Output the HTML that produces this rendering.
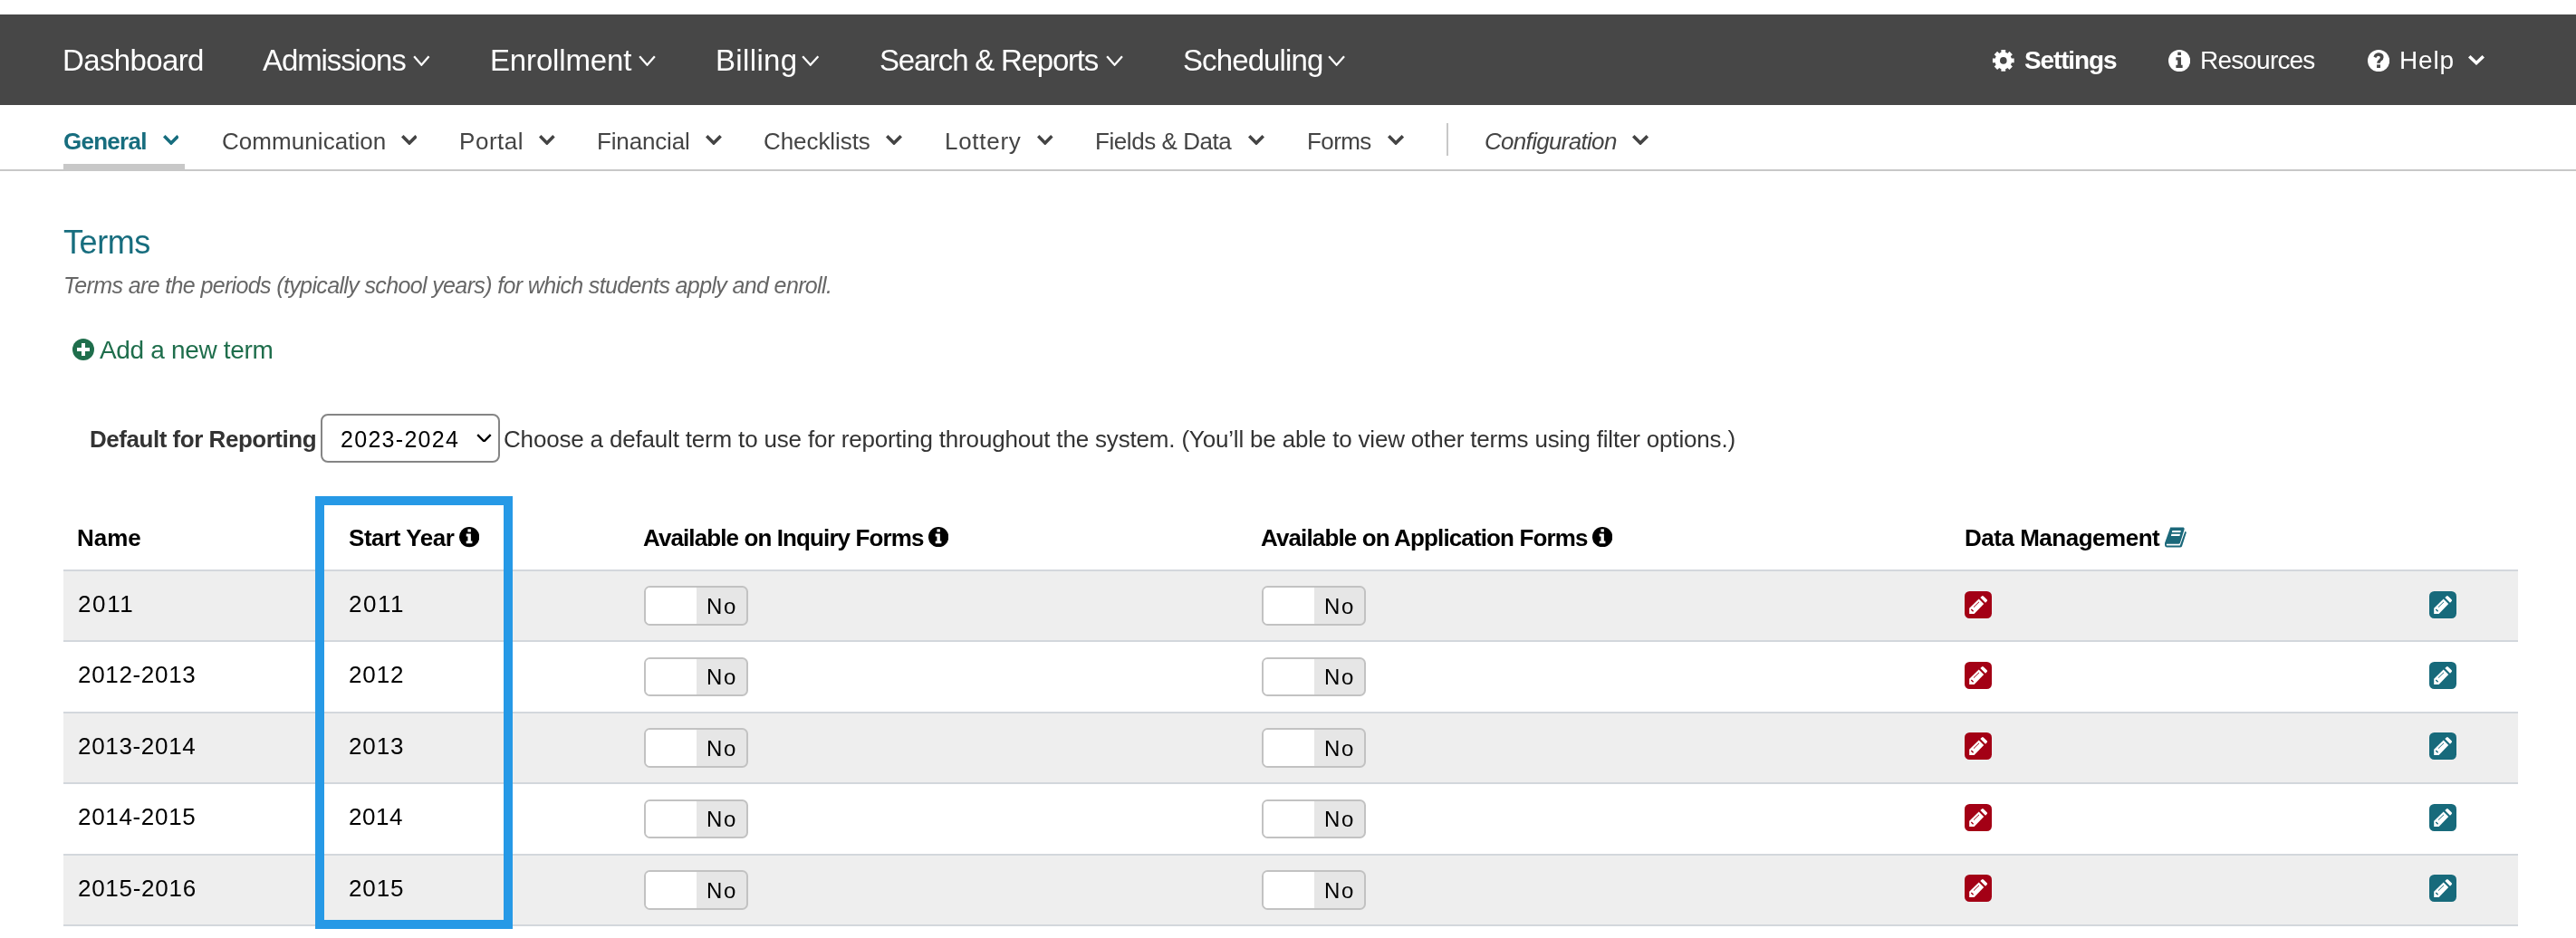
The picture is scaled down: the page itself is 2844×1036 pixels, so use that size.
<!DOCTYPE html><html><head><meta charset="utf-8"><title>Terms</title><style>
html,body{margin:0;padding:0;background:#fff;}
#pg{position:relative;width:2844px;height:1036px;overflow:hidden;background:#fff;font-family:"Liberation Sans", sans-serif;}
.t{position:absolute;white-space:nowrap;line-height:1;will-change:transform;}
.a{position:absolute;display:block;}
.tg{width:115px;height:43.5px;box-sizing:border-box;border:2px solid #c2c2c2;border-radius:6.5px;overflow:hidden;background:#e6e6e6;}
.tgw{position:absolute;left:0;top:0;width:56px;height:100%;background:#fff;}
.tgt{position:absolute;left:66.90px;top:8.60px;font-size:24px;line-height:1;color:#000;letter-spacing:1.600px;white-space:nowrap;will-change:transform;}
</style></head><body><div id="pg">
<div class="a" style="left:0;top:16px;width:2844px;height:100px;background:#474747"></div>
<div class="a" style="left:0;top:187px;width:2844px;height:2px;background:#c8c8c8"></div>
<div class="a" style="left:70px;top:181px;width:134px;height:6px;background:#c8c8c8"></div>
<div class="a" style="left:1597px;top:136px;width:2px;height:36px;background:#c8c8c8"></div>
<div class="a" style="left:70px;top:629px;width:2710px;height:2px;background:#d3d7dc"></div>
<div class="a" style="left:70px;top:631px;width:2710px;height:76px;background:#eeeeee"></div>
<div class="a" style="left:70px;top:707px;width:2710px;height:2px;background:#d3d7dc"></div>
<div class="a tg" style="left:711.2px;top:647.4px"><div class="tgw"></div><div class="tgg"></div><span class="tgt">No</span></div>
<div class="a tg" style="left:1393.4px;top:647.4px"><div class="tgw"></div><div class="tgg"></div><span class="tgt">No</span></div>
<svg class="a" style="left:2169px;top:652.5px" width="30" height="30" viewBox="0 0 30 30"><rect x="0" y="0" width="30" height="30" rx="5.5" fill="#a30015"/><path d="M5.2 18.8 L15.7 8.6 L21.2 14.1 L10.6 24.9 L5.2 24.9 Z" fill="#fff"/><path d="M17.3 7.1 L19 5.4 Q19.9 4.6 20.8 5.4 L24.7 9.3 Q25.5 10.2 24.7 11 L23 12.8 Z" fill="#fff"/><path d="M10 17.6 L16 11.8" stroke="#a30015" stroke-width="1" /><path d="M7.3 19.9 L9.6 22.3" stroke="#a30015" stroke-width="1.4" /></svg>
<svg class="a" style="left:2682px;top:652.5px" width="30" height="30" viewBox="0 0 30 30"><rect x="0" y="0" width="30" height="30" rx="5.5" fill="#176a7b"/><path d="M5.2 18.8 L15.7 8.6 L21.2 14.1 L10.6 24.9 L5.2 24.9 Z" fill="#fff"/><path d="M17.3 7.1 L19 5.4 Q19.9 4.6 20.8 5.4 L24.7 9.3 Q25.5 10.2 24.7 11 L23 12.8 Z" fill="#fff"/><path d="M10 17.6 L16 11.8" stroke="#176a7b" stroke-width="1" /><path d="M7.3 19.9 L9.6 22.3" stroke="#176a7b" stroke-width="1.4" /></svg>
<div class="a" style="left:70px;top:709px;width:2710px;height:77px;background:#fff"></div>
<div class="a" style="left:70px;top:786px;width:2710px;height:2px;background:#d3d7dc"></div>
<div class="a tg" style="left:711.2px;top:725.8px"><div class="tgw"></div><div class="tgg"></div><span class="tgt">No</span></div>
<div class="a tg" style="left:1393.4px;top:725.8px"><div class="tgw"></div><div class="tgg"></div><span class="tgt">No</span></div>
<svg class="a" style="left:2169px;top:730.9px" width="30" height="30" viewBox="0 0 30 30"><rect x="0" y="0" width="30" height="30" rx="5.5" fill="#a30015"/><path d="M5.2 18.8 L15.7 8.6 L21.2 14.1 L10.6 24.9 L5.2 24.9 Z" fill="#fff"/><path d="M17.3 7.1 L19 5.4 Q19.9 4.6 20.8 5.4 L24.7 9.3 Q25.5 10.2 24.7 11 L23 12.8 Z" fill="#fff"/><path d="M10 17.6 L16 11.8" stroke="#a30015" stroke-width="1" /><path d="M7.3 19.9 L9.6 22.3" stroke="#a30015" stroke-width="1.4" /></svg>
<svg class="a" style="left:2682px;top:730.9px" width="30" height="30" viewBox="0 0 30 30"><rect x="0" y="0" width="30" height="30" rx="5.5" fill="#176a7b"/><path d="M5.2 18.8 L15.7 8.6 L21.2 14.1 L10.6 24.9 L5.2 24.9 Z" fill="#fff"/><path d="M17.3 7.1 L19 5.4 Q19.9 4.6 20.8 5.4 L24.7 9.3 Q25.5 10.2 24.7 11 L23 12.8 Z" fill="#fff"/><path d="M10 17.6 L16 11.8" stroke="#176a7b" stroke-width="1" /><path d="M7.3 19.9 L9.6 22.3" stroke="#176a7b" stroke-width="1.4" /></svg>
<div class="a" style="left:70px;top:788px;width:2710px;height:76px;background:#eeeeee"></div>
<div class="a" style="left:70px;top:864px;width:2710px;height:2px;background:#d3d7dc"></div>
<div class="a tg" style="left:711.2px;top:804.2px"><div class="tgw"></div><div class="tgg"></div><span class="tgt">No</span></div>
<div class="a tg" style="left:1393.4px;top:804.2px"><div class="tgw"></div><div class="tgg"></div><span class="tgt">No</span></div>
<svg class="a" style="left:2169px;top:809.3px" width="30" height="30" viewBox="0 0 30 30"><rect x="0" y="0" width="30" height="30" rx="5.5" fill="#a30015"/><path d="M5.2 18.8 L15.7 8.6 L21.2 14.1 L10.6 24.9 L5.2 24.9 Z" fill="#fff"/><path d="M17.3 7.1 L19 5.4 Q19.9 4.6 20.8 5.4 L24.7 9.3 Q25.5 10.2 24.7 11 L23 12.8 Z" fill="#fff"/><path d="M10 17.6 L16 11.8" stroke="#a30015" stroke-width="1" /><path d="M7.3 19.9 L9.6 22.3" stroke="#a30015" stroke-width="1.4" /></svg>
<svg class="a" style="left:2682px;top:809.3px" width="30" height="30" viewBox="0 0 30 30"><rect x="0" y="0" width="30" height="30" rx="5.5" fill="#176a7b"/><path d="M5.2 18.8 L15.7 8.6 L21.2 14.1 L10.6 24.9 L5.2 24.9 Z" fill="#fff"/><path d="M17.3 7.1 L19 5.4 Q19.9 4.6 20.8 5.4 L24.7 9.3 Q25.5 10.2 24.7 11 L23 12.8 Z" fill="#fff"/><path d="M10 17.6 L16 11.8" stroke="#176a7b" stroke-width="1" /><path d="M7.3 19.9 L9.6 22.3" stroke="#176a7b" stroke-width="1.4" /></svg>
<div class="a" style="left:70px;top:866px;width:2710px;height:77px;background:#fff"></div>
<div class="a" style="left:70px;top:943px;width:2710px;height:2px;background:#d3d7dc"></div>
<div class="a tg" style="left:711.2px;top:882.6px"><div class="tgw"></div><div class="tgg"></div><span class="tgt">No</span></div>
<div class="a tg" style="left:1393.4px;top:882.6px"><div class="tgw"></div><div class="tgg"></div><span class="tgt">No</span></div>
<svg class="a" style="left:2169px;top:887.7px" width="30" height="30" viewBox="0 0 30 30"><rect x="0" y="0" width="30" height="30" rx="5.5" fill="#a30015"/><path d="M5.2 18.8 L15.7 8.6 L21.2 14.1 L10.6 24.9 L5.2 24.9 Z" fill="#fff"/><path d="M17.3 7.1 L19 5.4 Q19.9 4.6 20.8 5.4 L24.7 9.3 Q25.5 10.2 24.7 11 L23 12.8 Z" fill="#fff"/><path d="M10 17.6 L16 11.8" stroke="#a30015" stroke-width="1" /><path d="M7.3 19.9 L9.6 22.3" stroke="#a30015" stroke-width="1.4" /></svg>
<svg class="a" style="left:2682px;top:887.7px" width="30" height="30" viewBox="0 0 30 30"><rect x="0" y="0" width="30" height="30" rx="5.5" fill="#176a7b"/><path d="M5.2 18.8 L15.7 8.6 L21.2 14.1 L10.6 24.9 L5.2 24.9 Z" fill="#fff"/><path d="M17.3 7.1 L19 5.4 Q19.9 4.6 20.8 5.4 L24.7 9.3 Q25.5 10.2 24.7 11 L23 12.8 Z" fill="#fff"/><path d="M10 17.6 L16 11.8" stroke="#176a7b" stroke-width="1" /><path d="M7.3 19.9 L9.6 22.3" stroke="#176a7b" stroke-width="1.4" /></svg>
<div class="a" style="left:70px;top:945px;width:2710px;height:76px;background:#eeeeee"></div>
<div class="a" style="left:70px;top:1021px;width:2710px;height:2px;background:#d3d7dc"></div>
<div class="a tg" style="left:711.2px;top:961.0px"><div class="tgw"></div><div class="tgg"></div><span class="tgt">No</span></div>
<div class="a tg" style="left:1393.4px;top:961.0px"><div class="tgw"></div><div class="tgg"></div><span class="tgt">No</span></div>
<svg class="a" style="left:2169px;top:966.1px" width="30" height="30" viewBox="0 0 30 30"><rect x="0" y="0" width="30" height="30" rx="5.5" fill="#a30015"/><path d="M5.2 18.8 L15.7 8.6 L21.2 14.1 L10.6 24.9 L5.2 24.9 Z" fill="#fff"/><path d="M17.3 7.1 L19 5.4 Q19.9 4.6 20.8 5.4 L24.7 9.3 Q25.5 10.2 24.7 11 L23 12.8 Z" fill="#fff"/><path d="M10 17.6 L16 11.8" stroke="#a30015" stroke-width="1" /><path d="M7.3 19.9 L9.6 22.3" stroke="#a30015" stroke-width="1.4" /></svg>
<svg class="a" style="left:2682px;top:966.1px" width="30" height="30" viewBox="0 0 30 30"><rect x="0" y="0" width="30" height="30" rx="5.5" fill="#176a7b"/><path d="M5.2 18.8 L15.7 8.6 L21.2 14.1 L10.6 24.9 L5.2 24.9 Z" fill="#fff"/><path d="M17.3 7.1 L19 5.4 Q19.9 4.6 20.8 5.4 L24.7 9.3 Q25.5 10.2 24.7 11 L23 12.8 Z" fill="#fff"/><path d="M10 17.6 L16 11.8" stroke="#176a7b" stroke-width="1" /><path d="M7.3 19.9 L9.6 22.3" stroke="#176a7b" stroke-width="1.4" /></svg>
<div class="a" style="left:354.4px;top:456.5px;width:197.2px;height:54.9px;box-sizing:border-box;border:2px solid #858585;border-radius:8px;background:#fff"></div>
<span id="n_dash" class="t" style="left:68.60px;top:49.96px;font-size:33px;font-weight:400;font-style:normal;color:#fff;letter-spacing:-0.625px">Dashboard</span>
<span id="n_adm" class="t" style="left:290.00px;top:49.96px;font-size:33px;font-weight:400;font-style:normal;color:#fff;letter-spacing:-1.111px">Admissions</span>
<span id="n_enr" class="t" style="left:541.41px;top:49.96px;font-size:33px;font-weight:400;font-style:normal;color:#fff;letter-spacing:-0.156px">Enrollment</span>
<span id="n_bil" class="t" style="left:790.31px;top:49.96px;font-size:33px;font-weight:400;font-style:normal;color:#fff;letter-spacing:0.350px">Billing</span>
<span id="n_sea" class="t" style="left:971.00px;top:49.96px;font-size:33px;font-weight:400;font-style:normal;color:#fff;letter-spacing:-1.213px">Search &amp; Reports</span>
<span id="n_sch" class="t" style="left:1306.00px;top:49.96px;font-size:33px;font-weight:400;font-style:normal;color:#fff;letter-spacing:-0.889px">Scheduling</span>
<span id="n_set" class="t" style="left:2235.00px;top:53.39px;font-size:28px;font-weight:700;font-style:normal;color:#fff;letter-spacing:-1.143px">Settings</span>
<span id="n_res" class="t" style="left:2429.00px;top:53.39px;font-size:28px;font-weight:400;font-style:normal;color:#fff;letter-spacing:-0.812px">Resources</span>
<span id="n_hlp" class="t" style="left:2648.50px;top:53.39px;font-size:28px;font-weight:400;font-style:normal;color:#fff;letter-spacing:0.833px">Help</span>
<span id="s_gen" class="t" style="left:69.60px;top:142.99px;font-size:26px;font-weight:700;font-style:normal;color:#176d7e;letter-spacing:-0.733px">General</span>
<span id="s_com" class="t" style="left:244.71px;top:142.99px;font-size:26px;font-weight:400;font-style:normal;color:#444;letter-spacing:0.058px">Communication</span>
<span id="s_por" class="t" style="left:507.21px;top:142.99px;font-size:26px;font-weight:400;font-style:normal;color:#444;letter-spacing:0.540px">Portal</span>
<span id="s_fin" class="t" style="left:659.31px;top:142.99px;font-size:26px;font-weight:400;font-style:normal;color:#444;letter-spacing:-0.162px">Financial</span>
<span id="s_chk" class="t" style="left:843.41px;top:142.99px;font-size:26px;font-weight:400;font-style:normal;color:#444;letter-spacing:-0.067px">Checklists</span>
<span id="s_lot" class="t" style="left:1042.60px;top:142.99px;font-size:26px;font-weight:400;font-style:normal;color:#444;letter-spacing:0.717px">Lottery</span>
<span id="s_fld" class="t" style="left:1208.91px;top:142.99px;font-size:26px;font-weight:400;font-style:normal;color:#444;letter-spacing:-0.442px">Fields &amp; Data</span>
<span id="s_frm" class="t" style="left:1442.60px;top:142.99px;font-size:26px;font-weight:400;font-style:normal;color:#444;letter-spacing:-0.575px">Forms</span>
<span id="s_cfg" class="t" style="left:1638.50px;top:143.19px;font-size:26px;font-weight:400;font-style:italic;color:#444;letter-spacing:-0.692px">Configuration</span>
<span id="c_terms" class="t" style="left:69.71px;top:250.32px;font-size:36px;font-weight:400;font-style:normal;color:#176d7e;letter-spacing:-0.425px">Terms</span>
<span id="c_sub" class="t" style="left:69.60px;top:303.33px;font-size:25px;font-weight:400;font-style:italic;color:#666;letter-spacing:-0.634px">Terms are the periods (typically school years) for which students apply and enroll.</span>
<span id="c_add" class="t" style="left:109.81px;top:372.59px;font-size:28px;font-weight:400;font-style:normal;color:#1f6e4c;letter-spacing:-0.338px">Add a new term</span>
<span id="c_dfr" class="t" style="left:99.31px;top:471.99px;font-size:26px;font-weight:700;font-style:normal;color:#333;letter-spacing:-0.470px">Default for Reporting</span>
<span id="c_sel" class="t" style="left:375.91px;top:472.63px;font-size:25px;font-weight:400;font-style:normal;color:#000;letter-spacing:1.288px">2023-2024</span>
<span id="c_cho" class="t" style="left:556.41px;top:471.99px;font-size:26px;font-weight:400;font-style:normal;color:#333;letter-spacing:-0.179px">Choose a default term to use for reporting throughout the system. (You’ll be able to view other terms using filter options.)</span>
<span id="h_name" class="t" style="left:84.81px;top:580.89px;font-size:26px;font-weight:700;font-style:normal;color:#000;letter-spacing:0.000px">Name</span>
<span id="h_sy" class="t" style="left:384.60px;top:580.89px;font-size:26px;font-weight:700;font-style:normal;color:#000;letter-spacing:-0.456px">Start Year</span>
<span id="h_inq" class="t" style="left:709.91px;top:580.89px;font-size:26px;font-weight:700;font-style:normal;color:#000;letter-spacing:-0.896px">Available on Inquiry Forms</span>
<span id="h_app" class="t" style="left:1392.41px;top:580.89px;font-size:26px;font-weight:700;font-style:normal;color:#000;letter-spacing:-0.872px">Available on Application Forms</span>
<span id="h_dm" class="t" style="left:2168.50px;top:581.29px;font-size:26px;font-weight:700;font-style:normal;color:#000;letter-spacing:-0.486px">Data Management</span>
<span id="r0_name" class="t" style="left:85.91px;top:653.89px;font-size:26px;font-weight:400;font-style:normal;color:#000;letter-spacing:1.633px">2011</span>
<span id="r0_sy" class="t" style="left:384.91px;top:653.89px;font-size:26px;font-weight:400;font-style:normal;color:#000;letter-spacing:1.533px">2011</span>
<span id="r1_name" class="t" style="left:85.91px;top:732.34px;font-size:26px;font-weight:400;font-style:normal;color:#000;letter-spacing:0.675px">2012-2013</span>
<span id="r1_sy" class="t" style="left:384.91px;top:732.34px;font-size:26px;font-weight:400;font-style:normal;color:#000;letter-spacing:0.867px">2012</span>
<span id="r2_name" class="t" style="left:85.91px;top:810.79px;font-size:26px;font-weight:400;font-style:normal;color:#000;letter-spacing:0.675px">2013-2014</span>
<span id="r2_sy" class="t" style="left:384.91px;top:810.79px;font-size:26px;font-weight:400;font-style:normal;color:#000;letter-spacing:0.867px">2013</span>
<span id="r3_name" class="t" style="left:85.91px;top:889.24px;font-size:26px;font-weight:400;font-style:normal;color:#000;letter-spacing:0.675px">2014-2015</span>
<span id="r3_sy" class="t" style="left:384.91px;top:889.24px;font-size:26px;font-weight:400;font-style:normal;color:#000;letter-spacing:0.533px">2014</span>
<span id="r4_name" class="t" style="left:85.91px;top:967.69px;font-size:26px;font-weight:400;font-style:normal;color:#000;letter-spacing:0.725px">2015-2016</span>
<span id="r4_sy" class="t" style="left:384.91px;top:967.69px;font-size:26px;font-weight:400;font-style:normal;color:#000;letter-spacing:0.867px">2015</span>
<svg class="a" style="left:456.4px;top:61.4px" width="18.7" height="11.8" viewBox="0 0 18.7 11.8"><path d="M1.15 1.15 L9.35 10.65 L17.55 1.15" fill="none" stroke="#fff" stroke-width="2.3" stroke-linecap="butt" stroke-linejoin="miter"/></svg>
<svg class="a" style="left:705.4px;top:61.4px" width="19.0" height="11.8" viewBox="0 0 19.0 11.8"><path d="M1.15 1.15 L9.50 10.65 L17.85 1.15" fill="none" stroke="#fff" stroke-width="2.3" stroke-linecap="butt" stroke-linejoin="miter"/></svg>
<svg class="a" style="left:885.4px;top:61.4px" width="19.5" height="11.8" viewBox="0 0 19.5 11.8"><path d="M1.15 1.15 L9.75 10.65 L18.35 1.15" fill="none" stroke="#fff" stroke-width="2.3" stroke-linecap="butt" stroke-linejoin="miter"/></svg>
<svg class="a" style="left:1221.0px;top:61.4px" width="19.1" height="11.8" viewBox="0 0 19.1 11.8"><path d="M1.15 1.15 L9.55 10.65 L17.95 1.15" fill="none" stroke="#fff" stroke-width="2.3" stroke-linecap="butt" stroke-linejoin="miter"/></svg>
<svg class="a" style="left:1466.4px;top:61.4px" width="19.2" height="11.8" viewBox="0 0 19.2 11.8"><path d="M1.15 1.15 L9.60 10.65 L18.05 1.15" fill="none" stroke="#fff" stroke-width="2.3" stroke-linecap="butt" stroke-linejoin="miter"/></svg>
<svg class="a" style="left:2725.0px;top:61.0px" width="18.0" height="11.0" viewBox="0 0 100 64" preserveAspectRatio="none"><path d="M0 14 L14 0 L50 36 L86 0 L100 14 L50 64 Z" fill="#fff"/></svg>
<svg class="a" style="left:179.6px;top:148.8px" width="17.9" height="11.6" viewBox="0 0 100 64" preserveAspectRatio="none"><path d="M0 14 L14 0 L50 36 L86 0 L100 14 L50 64 Z" fill="#176d7e"/></svg>
<svg class="a" style="left:442.6px;top:148.8px" width="17.9" height="11.6" viewBox="0 0 100 64" preserveAspectRatio="none"><path d="M0 14 L14 0 L50 36 L86 0 L100 14 L50 64 Z" fill="#444"/></svg>
<svg class="a" style="left:595.0px;top:148.8px" width="17.7" height="11.6" viewBox="0 0 100 64" preserveAspectRatio="none"><path d="M0 14 L14 0 L50 36 L86 0 L100 14 L50 64 Z" fill="#444"/></svg>
<svg class="a" style="left:779.0px;top:148.8px" width="17.9" height="11.6" viewBox="0 0 100 64" preserveAspectRatio="none"><path d="M0 14 L14 0 L50 36 L86 0 L100 14 L50 64 Z" fill="#444"/></svg>
<svg class="a" style="left:978.0px;top:148.8px" width="18.0" height="11.6" viewBox="0 0 100 64" preserveAspectRatio="none"><path d="M0 14 L14 0 L50 36 L86 0 L100 14 L50 64 Z" fill="#444"/></svg>
<svg class="a" style="left:1145.0px;top:148.8px" width="17.6" height="11.6" viewBox="0 0 100 64" preserveAspectRatio="none"><path d="M0 14 L14 0 L50 36 L86 0 L100 14 L50 64 Z" fill="#444"/></svg>
<svg class="a" style="left:1378.0px;top:148.8px" width="18.0" height="11.6" viewBox="0 0 100 64" preserveAspectRatio="none"><path d="M0 14 L14 0 L50 36 L86 0 L100 14 L50 64 Z" fill="#444"/></svg>
<svg class="a" style="left:1531.5px;top:148.8px" width="18.1" height="11.6" viewBox="0 0 100 64" preserveAspectRatio="none"><path d="M0 14 L14 0 L50 36 L86 0 L100 14 L50 64 Z" fill="#444"/></svg>
<svg class="a" style="left:1801.6px;top:148.8px" width="18.1" height="11.6" viewBox="0 0 100 64" preserveAspectRatio="none"><path d="M0 14 L14 0 L50 36 L86 0 L100 14 L50 64 Z" fill="#444"/></svg>
<svg class="a" style="left:526.3px;top:478.8px" width="16.9" height="9.7" viewBox="0 0 16.9 9.7"><path d="M1.20 1.20 L8.45 8.50 L15.70 1.20" fill="none" stroke="#000" stroke-width="2.4" stroke-linecap="butt" stroke-linejoin="miter"/></svg>
<svg class="a" style="left:0;top:0" width="2844" height="120" viewBox="0 0 2844 120"><path d="M2209.35 58.03 L2209.40 55.04 L2214.20 55.04 L2214.25 58.03 L2216.33 58.90 L2218.49 56.81 L2221.89 60.21 L2219.80 62.37 L2220.67 64.45 L2223.66 64.50 L2223.66 69.30 L2220.67 69.35 L2219.80 71.43 L2221.89 73.59 L2218.49 76.99 L2216.33 74.90 L2214.25 75.77 L2214.20 78.76 L2209.40 78.76 L2209.35 75.77 L2207.27 74.90 L2205.11 76.99 L2201.71 73.59 L2203.80 71.43 L2202.93 69.35 L2199.94 69.30 L2199.94 64.50 L2202.93 64.45 L2203.80 62.37 L2201.71 60.21 L2205.11 56.81 L2207.27 58.90 Z" fill="#fff"/><circle cx="2211.8" cy="66.9" r="9.2" fill="#fff"/><circle cx="2211.8" cy="66.9" r="3.8" fill="#474747"/></svg>
<svg class="a" style="left:2393.8px;top:54.9px" width="24.2" height="24.2" viewBox="0 0 24.2 24.2"><circle cx="12.1" cy="12.1" r="12.1" fill="#fff"/><rect x="10.24" y="2.6" width="3.74" height="3.4" fill="#474747"/><path d="M8.38 8.16 H13.98 V16.74 H15.63 V19.91 H8.38 V16.74 H10.24 V11.52 H8.38 Z" fill="#474747"/></svg>
<svg class="a" style="left:2613.8px;top:54.9px" width="24.2" height="24.2" viewBox="0 0 24.2 24.2"><circle cx="12.1" cy="12.1" r="12.1" fill="#fff"/><path d="M6.4 7.4 Q8.3 3.2 12.4 3.3 Q17.6 3.6 17.6 8.2 Q17.4 11 14.9 12.6 Q13.8 13.3 13.8 14.7 H10.2 Q10.1 12.4 12.1 10.9 Q14 9.7 13.9 8.3 Q13.6 6.8 12 6.7 Q10.4 6.8 9.3 8.9 Z" fill="#474747"/><rect x="10.1" y="16.4" width="3.9" height="3.6" fill="#474747"/></svg>
<svg class="a" style="left:79.9px;top:374px" width="24" height="24" viewBox="0 0 24 24"><circle cx="12" cy="12" r="12" fill="#1f6e4c"/><path d="M10 5 H14 V10 H19 V14 H14 V19 H10 V14 H5 V10 H10 Z" fill="#fff"/></svg>
<svg class="a" style="left:506.5px;top:582.4px" width="22.3" height="22.3" viewBox="0 0 24.2 24.2"><circle cx="12.1" cy="12.1" r="12.1" fill="#000"/><rect x="10.24" y="2.6" width="3.74" height="3.4" fill="#fff"/><path d="M8.38 8.16 H13.98 V16.74 H15.63 V19.91 H8.38 V16.74 H10.24 V11.52 H8.38 Z" fill="#fff"/></svg>
<svg class="a" style="left:1025px;top:582.1px" width="22.3" height="22.3" viewBox="0 0 24.2 24.2"><circle cx="12.1" cy="12.1" r="12.1" fill="#000"/><rect x="10.24" y="2.6" width="3.74" height="3.4" fill="#fff"/><path d="M8.38 8.16 H13.98 V16.74 H15.63 V19.91 H8.38 V16.74 H10.24 V11.52 H8.38 Z" fill="#fff"/></svg>
<svg class="a" style="left:1758px;top:582.1px" width="22.3" height="22.3" viewBox="0 0 24.2 24.2"><circle cx="12.1" cy="12.1" r="12.1" fill="#000"/><rect x="10.24" y="2.6" width="3.74" height="3.4" fill="#fff"/><path d="M8.38 8.16 H13.98 V16.74 H15.63 V19.91 H8.38 V16.74 H10.24 V11.52 H8.38 Z" fill="#fff"/></svg>
<svg class="a" style="left:2390px;top:582.3px" width="24" height="22.5" viewBox="150 120 700 660" preserveAspectRatio="none"><path d="M330 135 H750 Q790 140 780 200 L645 630 Q630 668 590 668 H215 Q185 690 215 718 H640 L800 265 Q840 265 845 305 L705 745 Q690 780 645 780 H225 Q150 775 150 690 V640 Z" fill="#1b687a"/><path d="M395 240 H670 L655 295 H380 Z" fill="#fff"/><path d="M365 350 H645 L630 410 H350 Z" fill="#fff"/></svg>
<div class="a" style="left:348px;top:548px;width:218px;height:478px;box-sizing:border-box;border:10px solid #2699e6"></div>
</div></body></html>
